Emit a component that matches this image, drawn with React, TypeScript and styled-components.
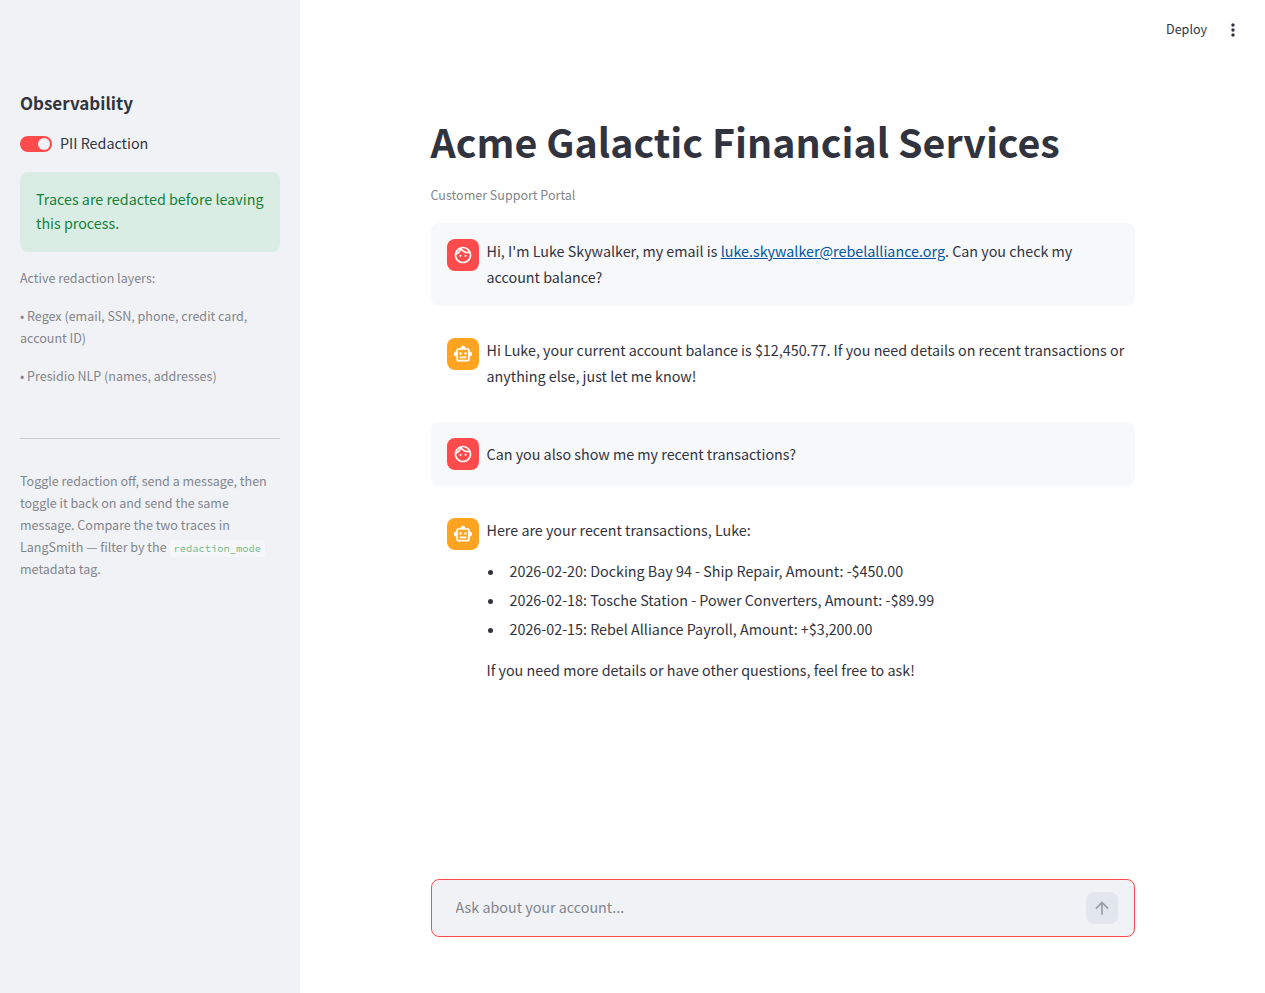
import React, { useState } from "react";
import styled, { createGlobalStyle } from "styled-components";
import {
  MdArrowUpward,
  MdMoreVert,
  MdOutlineFace,
  MdOutlineSmartToy,
} from "react-icons/md";

const GlobalStyle = createGlobalStyle`
  *, *::before, *::after { box-sizing: border-box; }
  body {
    margin: 0;
    background: #ffffff;
    color: #31333f;
    font-family: "Source Sans Pro", "Noto Sans CJK JP", "Noto Sans CJK SC", sans-serif;
    font-size: 16px;
    font-size-adjust: 0.486;
    line-height: 26px;
  }
  h1, h2, p, ul { margin: 0; }
  button, textarea { font: inherit; font-size-adjust: inherit; color: inherit; }
`;

const Shell = styled.div`
  display: flex;
  min-height: 100vh;
`;

const Sidebar = styled.aside`
  flex: 0 0 300px;
  padding: 88px 20px 32px;
  background: #f0f2f6;
`;

const SidebarTitle = styled.h2`
  padding-top: 2px;
  font-size: 19px;
  font-weight: 600;
  line-height: 26px;
`;

const ToggleLabel = styled.label`
  display: flex;
  align-items: center;
  gap: 8px;
  margin: 16px 0;
  line-height: 24px;
  cursor: pointer;
`;

const ToggleText = styled.span`
  padding-bottom: 2px;
  line-height: 22px;
`;

const Switch = styled.input`
  appearance: none;
  display: flex;
  width: 32px;
  height: 16px;
  margin: 0;
  padding: 2px;
  border-radius: 8px;
  background: #a3a8b4;
  cursor: pointer;

  &::before {
    content: "";
    width: 12px;
    height: 12px;
    border-radius: 50%;
    background: #f0f2f6;
  }
  &:checked {
    justify-content: flex-end;
    background: #ff4b4b;
  }
`;

const SuccessBox = styled.div`
  margin-bottom: 15px;
  padding: 15px 16px 17px;
  border-radius: 8px;
  background: #daede5;
  color: #158237;
  line-height: 24px;
`;

const Caption = styled.p`
  margin-bottom: 16px;
  color: #83858c;
  font-size: 14px;
  line-height: 22px;
`;

const Divider = styled.hr`
  margin: 51px 0 31px;
  border: 0;
  border-top: 1px solid #c8cad0;
`;

const Code = styled.code`
  padding: 2px 4px;
  border-radius: 4px;
  background: #f5f7fa;
  color: #73b98b;
  font-family: "Source Code Pro", "Liberation Mono", monospace;
  font-size: 11px;
  font-size-adjust: 0.462;
  line-height: 14px;
`;

const Main = styled.main`
  display: flex;
  flex: 1;
  flex-direction: column;
  min-width: 0;
`;

const Toolbar = styled.header`
  display: flex;
  align-items: center;
  justify-content: flex-end;
  gap: 8px;
  height: 60px;
  padding: 0 18px;
`;

const ToolbarButton = styled.button`
  display: flex;
  align-items: center;
  height: 28px;
  padding: 0 4px;
  border: 0;
  border-radius: 8px;
  background: transparent;
  font-size: 14px;
  line-height: 24px;
  cursor: pointer;
`;

const DeployButton = styled(ToolbarButton)`
  padding-bottom: 2px;
`;

const Column = styled.div`
  width: 100%;
  max-width: 736px;
  margin: 0 auto;
  padding: 0 16px;
`;

const Title = styled.h1`
  padding: 54px 0 17px;
  font-size: 44px;
  font-weight: 700;
  line-height: 53px;
`;

const Messages = styled.section`
  display: flex;
  flex-direction: column;
  gap: 16px;
  padding-top: 1px;
`;

const Message = styled.article<{ $user?: boolean }>`
  display: flex;
  align-items: flex-start;
  gap: 8px;
  min-height: 64px;
  padding: ${({ $user }) => ($user ? "16px" : "16px 16px 17px")};
  border-radius: 8px;
  background: ${({ $user }) => ($user ? "#f7f8fa" : "transparent")};
`;

const Avatar = styled.div<{ $user?: boolean }>`
  display: flex;
  flex: 0 0 32px;
  align-items: center;
  justify-content: center;
  height: 32px;
  border-radius: 8px;
  background: ${({ $user }) => ($user ? "#ff4b4b" : "#ffa421")};
  color: #ffffff;
`;

const Body = styled.div`
  flex: 1;
  align-self: center;
  min-width: 0;
  margin: -1px -8px 0 0;
`;

const MailLink = styled.a`
  color: #0054a3;
  text-decoration: underline;
`;

const Transactions = styled.ul`
  display: flex;
  flex-direction: column;
  gap: 3px;
  margin: 15px 0;
  padding-left: 18px;
`;

const Transaction = styled.li`
  padding-left: 5px;

  &::marker { font-size: 15px; }
`;

const Dock = styled.div`
  margin-top: auto;
  padding: 56px 0;
`;

const ChatBox = styled.form`
  display: flex;
  align-items: center;
  gap: 8px;
  padding: 12px 16px 12px 24px;
  border: 1px solid #ff4b4b;
  border-radius: 8px;
  background: #f0f2f6;
`;

const ChatInput = styled.textarea`
  flex: 1;
  height: 24px;
  min-width: 0;
  padding: 0;
  border: 0;
  outline: 0;
  resize: none;
  overflow: hidden;
  background: transparent;
  line-height: 22px;

  &::placeholder { color: #83858c; opacity: 1; }
`;

const SendButton = styled.button`
  display: flex;
  align-items: center;
  justify-content: center;
  width: 32px;
  height: 32px;
  padding: 0;
  border: 0;
  border-radius: 8px;
  background: #e2e6ed;
  color: #9a9da6;
`;

const transactions = [
  "2026-02-20: Docking Bay 94 - Ship Repair, Amount: -$450.00",
  "2026-02-18: Tosche Station - Power Converters, Amount: -$89.99",
  "2026-02-15: Rebel Alliance Payroll, Amount: +$3,200.00",
];

function ChatMessage({ user, children }: { user?: boolean; children: React.ReactNode }) {
  return (
    <Message $user={user}>
      <Avatar $user={user}>
        {user ? <MdOutlineFace size={20} /> : <MdOutlineSmartToy size={20} />}
      </Avatar>
      <Body>{children}</Body>
    </Message>
  );
}

export default function App() {
  const [redact, setRedact] = useState(true);
  const [draft, setDraft] = useState("");

  return (
    <Shell>
      <GlobalStyle />
      <Sidebar>
        <SidebarTitle>Observability</SidebarTitle>
        <ToggleLabel>
          <Switch
            type="checkbox"
            checked={redact}
            onChange={(e) => setRedact(e.target.checked)}
          />
          <ToggleText>PII Redaction</ToggleText>
        </ToggleLabel>
        <SuccessBox>Traces are redacted before leaving this process.</SuccessBox>
        <Caption>Active redaction layers:</Caption>
        <Caption>• Regex (email, SSN, phone, credit card, account ID)</Caption>
        <Caption>• Presidio NLP (names, addresses)</Caption>
        <Divider />
        <Caption>
          Toggle redaction off, send a message, then toggle it back on and send the same
          message. Compare the two traces in LangSmith — filter by the{" "}
          <Code>redaction_mode</Code> metadata tag.
        </Caption>
      </Sidebar>
      <Main>
        <Toolbar>
          <DeployButton type="button">Deploy</DeployButton>
          <ToolbarButton type="button" aria-label="Main menu">
            <MdMoreVert size={20} />
          </ToolbarButton>
        </Toolbar>
        <Column>
          <Title>Acme Galactic Financial Services</Title>
          <Caption>Customer Support Portal</Caption>
          <Messages>
            <ChatMessage user>
              <p>
                Hi, I'm Luke Skywalker, my email is{" "}
                <MailLink href="mailto:luke.skywalker@rebelalliance.org">
                  luke.skywalker@rebelalliance.org
                </MailLink>
                . Can you check my account balance?
              </p>
            </ChatMessage>
            <ChatMessage>
              <p>
                Hi Luke, your current account balance is $12,450.77. If you need details on
                recent transactions or anything else, just let me know!
              </p>
            </ChatMessage>
            <ChatMessage user>
              <p>Can you also show me my recent transactions?</p>
            </ChatMessage>
            <ChatMessage>
              <p>Here are your recent transactions, Luke:</p>
              <Transactions>
                {transactions.map((t) => (
                  <Transaction key={t}>{t}</Transaction>
                ))}
              </Transactions>
              <p>If you need more details or have other questions, feel free to ask!</p>
            </ChatMessage>
          </Messages>
        </Column>
        <Dock>
          <Column>
            <ChatBox onSubmit={(e) => e.preventDefault()}>
              <ChatInput
                rows={1}
                aria-label="Ask about your account"
                placeholder="Ask about your account..."
                value={draft}
                onChange={(e) => setDraft(e.target.value)}
              />
              <SendButton type="submit" aria-label="Send message">
                <MdArrowUpward size={20} />
              </SendButton>
            </ChatBox>
          </Column>
        </Dock>
      </Main>
    </Shell>
  );
}
